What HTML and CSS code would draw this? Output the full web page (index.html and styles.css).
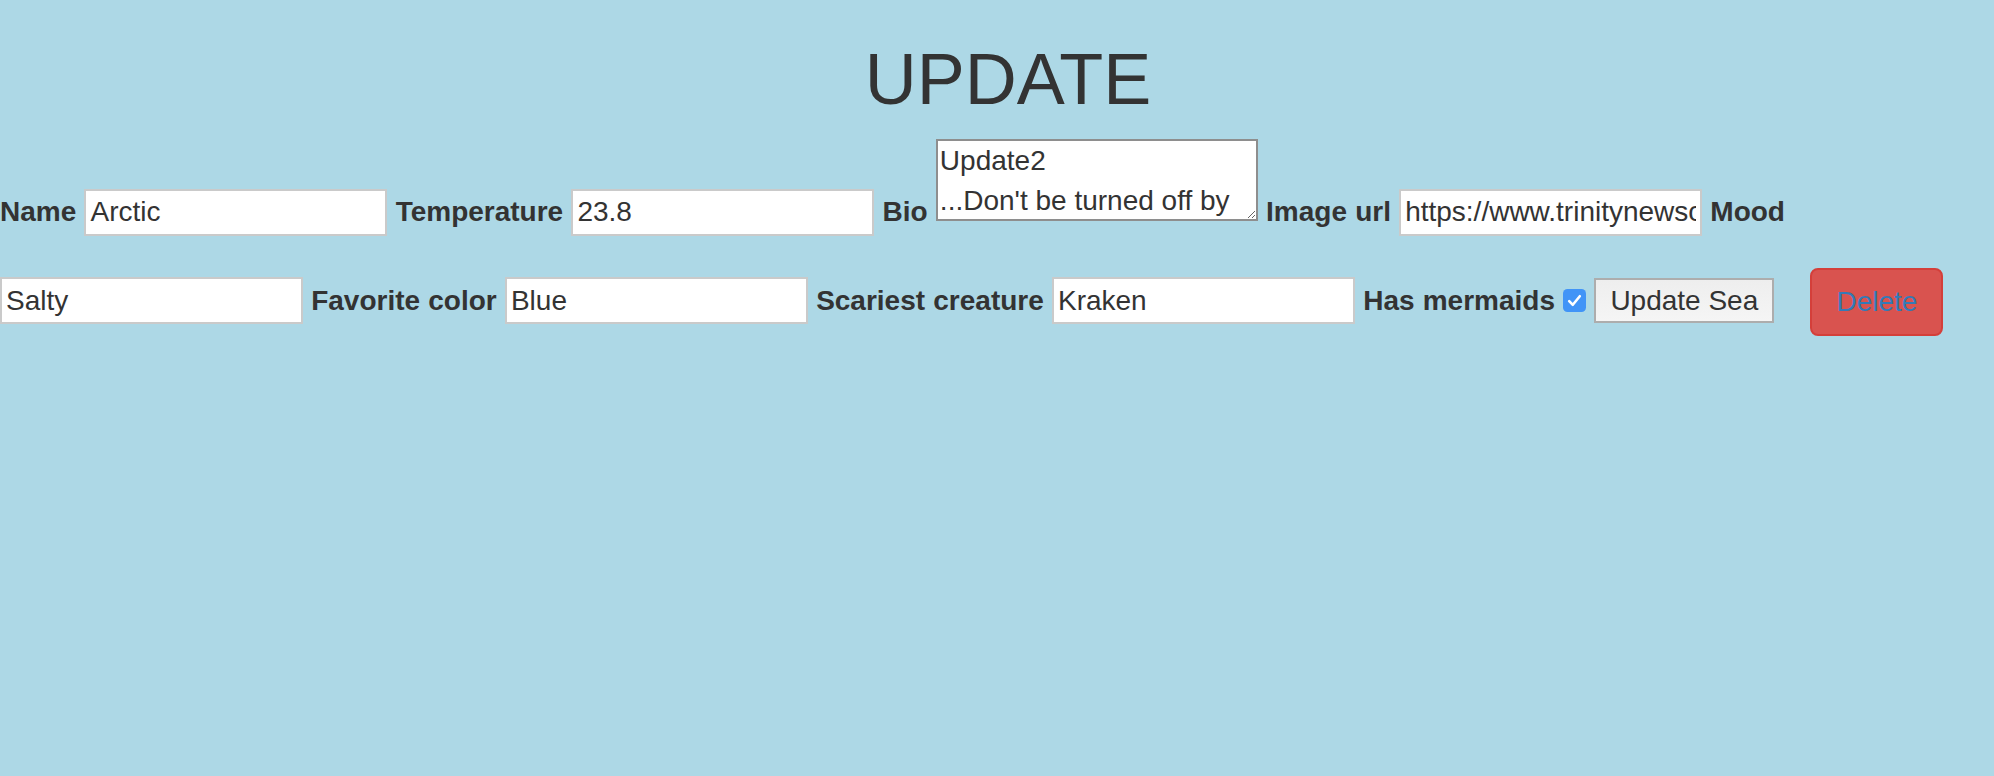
FILE: index.html
```html
<!DOCTYPE html>
<html lang="en">
<head>
<meta charset="utf-8">
<title>Update Sea</title>
<link rel="stylesheet" href="styles.css">
</head>
<body>
<h1 class="title">UPDATE</h1>
<form class="sea-form">
  <div class="row row-first">
    <label class="lbl">Name</label>
    <input class="field" type="text" value="Arctic">
    <label class="lbl">Temperature</label>
    <input class="field" type="text" value="23.8">
    <label class="lbl">Bio</label>
    <span class="bio-wrap"><textarea class="bio">Update2
...Don't be turned off by</textarea></span>
    <label class="lbl">Image url</label>
    <input class="field" type="text" value="https://www.trinitynewscompany.com/arctic.jpg">
    <label class="lbl">Mood</label>
  </div>
  <div class="row row-second">
    <input class="field" type="text" value="Salty">
    <label class="lbl">Favorite color</label>
    <input class="field" type="text" value="Blue">
    <label class="lbl">Scariest creature</label>
    <input class="field" type="text" value="Kraken">
    <label class="lbl">Has mermaids</label>
    <svg class="check" width="23" height="23" viewBox="0 0 23 23" aria-hidden="true"><rect x="0" y="0" width="23" height="23" rx="4.5" fill="#4194f7"/><path d="M6.2 12.2 L9.8 15.8 L16.8 7.2" fill="none" stroke="#fff" stroke-width="2.6" stroke-linecap="round" stroke-linejoin="round"/></svg>
    <button class="btn-update" type="button">Update Sea</button>
    <button class="btn-delete" type="button">Delete</button>
  </div>
</form>
</body>
</html>
```
FILE: styles.css
```css
body {
  margin: 0;
  background: #add8e6;
  font-family: "Liberation Sans", Arial, sans-serif;
  font-size: 28px;
  line-height: 40px;
  color: #333;
}

.title {
  margin: 40px 0 20px;
  padding-left: 22px;
  font-size: 72px;
  line-height: 1.1;
  font-weight: 400;
  text-align: center;
  color: #333;
}

.sea-form {
  margin: 0;
}

.row {
  white-space: nowrap;
  word-spacing: 0.4px;
}

.row-second {
  padding-top: 32px;
}

.lbl {
  font-weight: bold;
}

.field {
  box-sizing: border-box;
  width: 303px;
  height: 47px;
  margin: 0;
  padding: 2px 4px;
  border: 2px solid #cacaca;
  background: #fff;
  color: #333;
  font-family: inherit;
  font-size: 28px;
  line-height: normal;
  word-spacing: 0;
  vertical-align: baseline;
  outline: none;
}

.bio-wrap {
  display: inline-block;
  overflow: hidden;
  vertical-align: baseline;
}

.bio {
  display: block;
  box-sizing: border-box;
  width: 322px;
  height: 82px;
  margin: 0;
  padding: 0 2px;
  border: 2px solid #8e8e8e;
  background: #fff;
  color: #333;
  font-family: inherit;
  font-size: 28px;
  line-height: 40px;
  word-spacing: 0;
  overflow: hidden;
  resize: both;
}

.check {
  vertical-align: -2px;
}

.btn-update {
  box-sizing: border-box;
  height: 45px;
  margin: 0;
  padding: 0 14px;
  border: 2px solid #adadad;
  background: linear-gradient(#eeeeee, #f5f5f5);
  color: #333;
  font-family: inherit;
  font-size: 28px;
  line-height: normal;
  word-spacing: 0;
  vertical-align: baseline;
}

.btn-delete {
  box-sizing: border-box;
  margin: 0 0 0 28px;
  padding: 12px 24px;
  border: 2px solid #d43f3a;
  border-radius: 8px;
  background: #d9534f;
  color: #337ab7;
  font-family: inherit;
  font-size: 28px;
  line-height: 40px;
  vertical-align: -1px;
}
```
